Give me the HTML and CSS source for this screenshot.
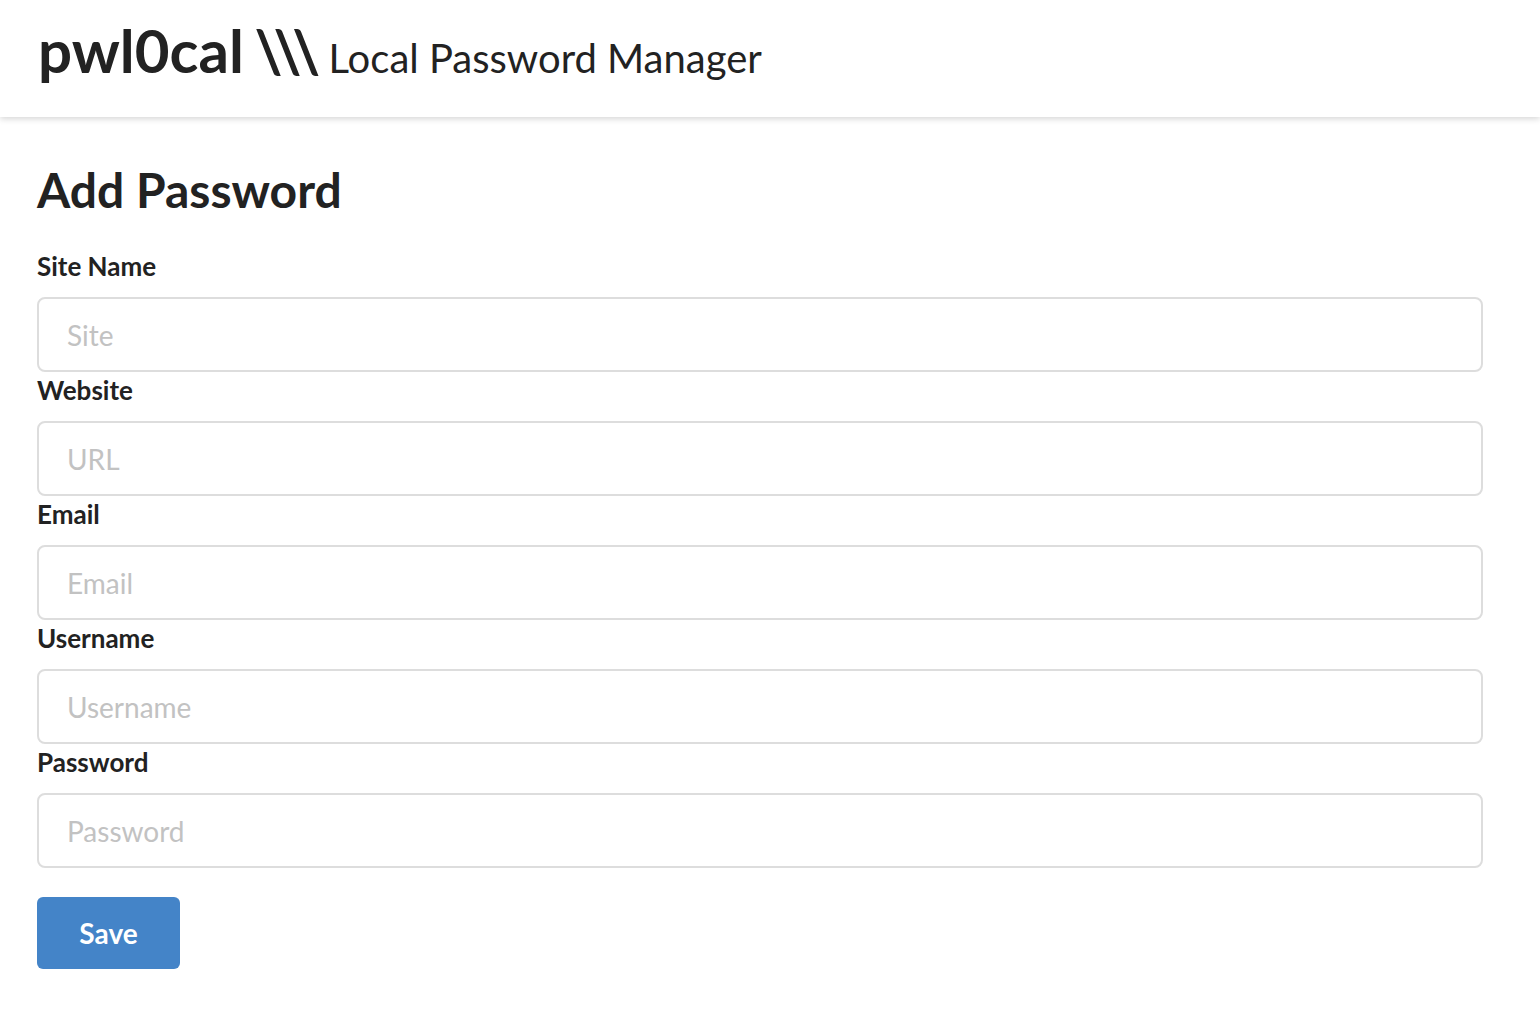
FILE: index.html
```html
<!DOCTYPE html>
<html lang="en">
<head>
<meta charset="utf-8">
<title>pwl0cal - Local Password Manager</title>
<link rel="stylesheet" href="styles.css">
</head>
<body>
<header class="topbar">
  <h1 class="brand"><span class="brand-name">pwl0cal <span class="brand-slashes">\\\</span></span> <span class="brand-sub">Local Password Manager</span></h1>
</header>
<main class="content">
  <h2 class="page-title">Add Password</h2>
  <form class="pw-form">
    <label class="field-label" for="site">Site Name</label>
    <input class="field-input" id="site" type="text" placeholder="Site">
    <label class="field-label" for="url">Website</label>
    <input class="field-input" id="url" type="text" placeholder="URL">
    <label class="field-label" for="email">Email</label>
    <input class="field-input" id="email" type="text" placeholder="Email">
    <label class="field-label" for="user">Username</label>
    <input class="field-input" id="user" type="text" placeholder="Username">
    <label class="field-label" for="pass">Password</label>
    <input class="field-input" id="pass" type="password" placeholder="Password">
    <button class="save-btn" type="button">Save</button>
  </form>
</main>
</body>
</html>
```
FILE: styles.css
```css
* { box-sizing: border-box; }
html, body {
  margin: 0;
  padding: 0;
  background: #ffffff;
  font-family: Lato, "Open Sans", sans-serif;
  color: #222222;
}
.topbar {
  height: 117px;
  background: #ffffff;
  box-shadow: 0 2px 6px rgba(0, 0, 0, 0.16);
  padding: 0 38px 17px;
  display: flex;
  align-items: center;
  position: relative;
}
.brand {
  margin: 0;
  font-weight: 400;
  line-height: 1;
  white-space: nowrap;
}
.brand-name {
  font-weight: 700;
  font-size: 60px;
}
.brand-slashes {
  letter-spacing: -9px;
  margin-left: -4px;
  margin-right: 9px;
}
.brand-sub {
  font-weight: 400;
  font-size: 40px;
}
.content {
  padding: 0 57px 40px 37px;
}
.page-title {
  margin: 44px 0 29px;
  font-size: 48px;
  font-weight: 700;
  line-height: 1.2;
}
.pw-form {
  display: flex;
  flex-direction: column;
  align-items: stretch;
}
.field-label {
  display: block;
  font-size: 26px;
  font-weight: 700;
  line-height: 36px;
  margin-bottom: 13px;
  color: #222222;
}
.field-input {
  display: block;
  width: 100%;
  height: 75px;
  border: 2px solid #dddddd;
  border-radius: 8px;
  padding: 2px 28px 0;
  font-family: Lato, sans-serif;
  font-size: 28px;
  color: #222222;
  background: #ffffff;
  outline: none;
}
.field-input::placeholder {
  color: #c2c2c2;
}
.save-btn {
  align-self: flex-start;
  margin-top: 29px;
  width: 143px;
  height: 72px;
  border: none;
  border-radius: 6px;
  background: #4484c8;
  color: #ffffff;
  font-family: Lato, sans-serif;
  font-size: 28px;
  font-weight: 700;
  cursor: pointer;
}
```
